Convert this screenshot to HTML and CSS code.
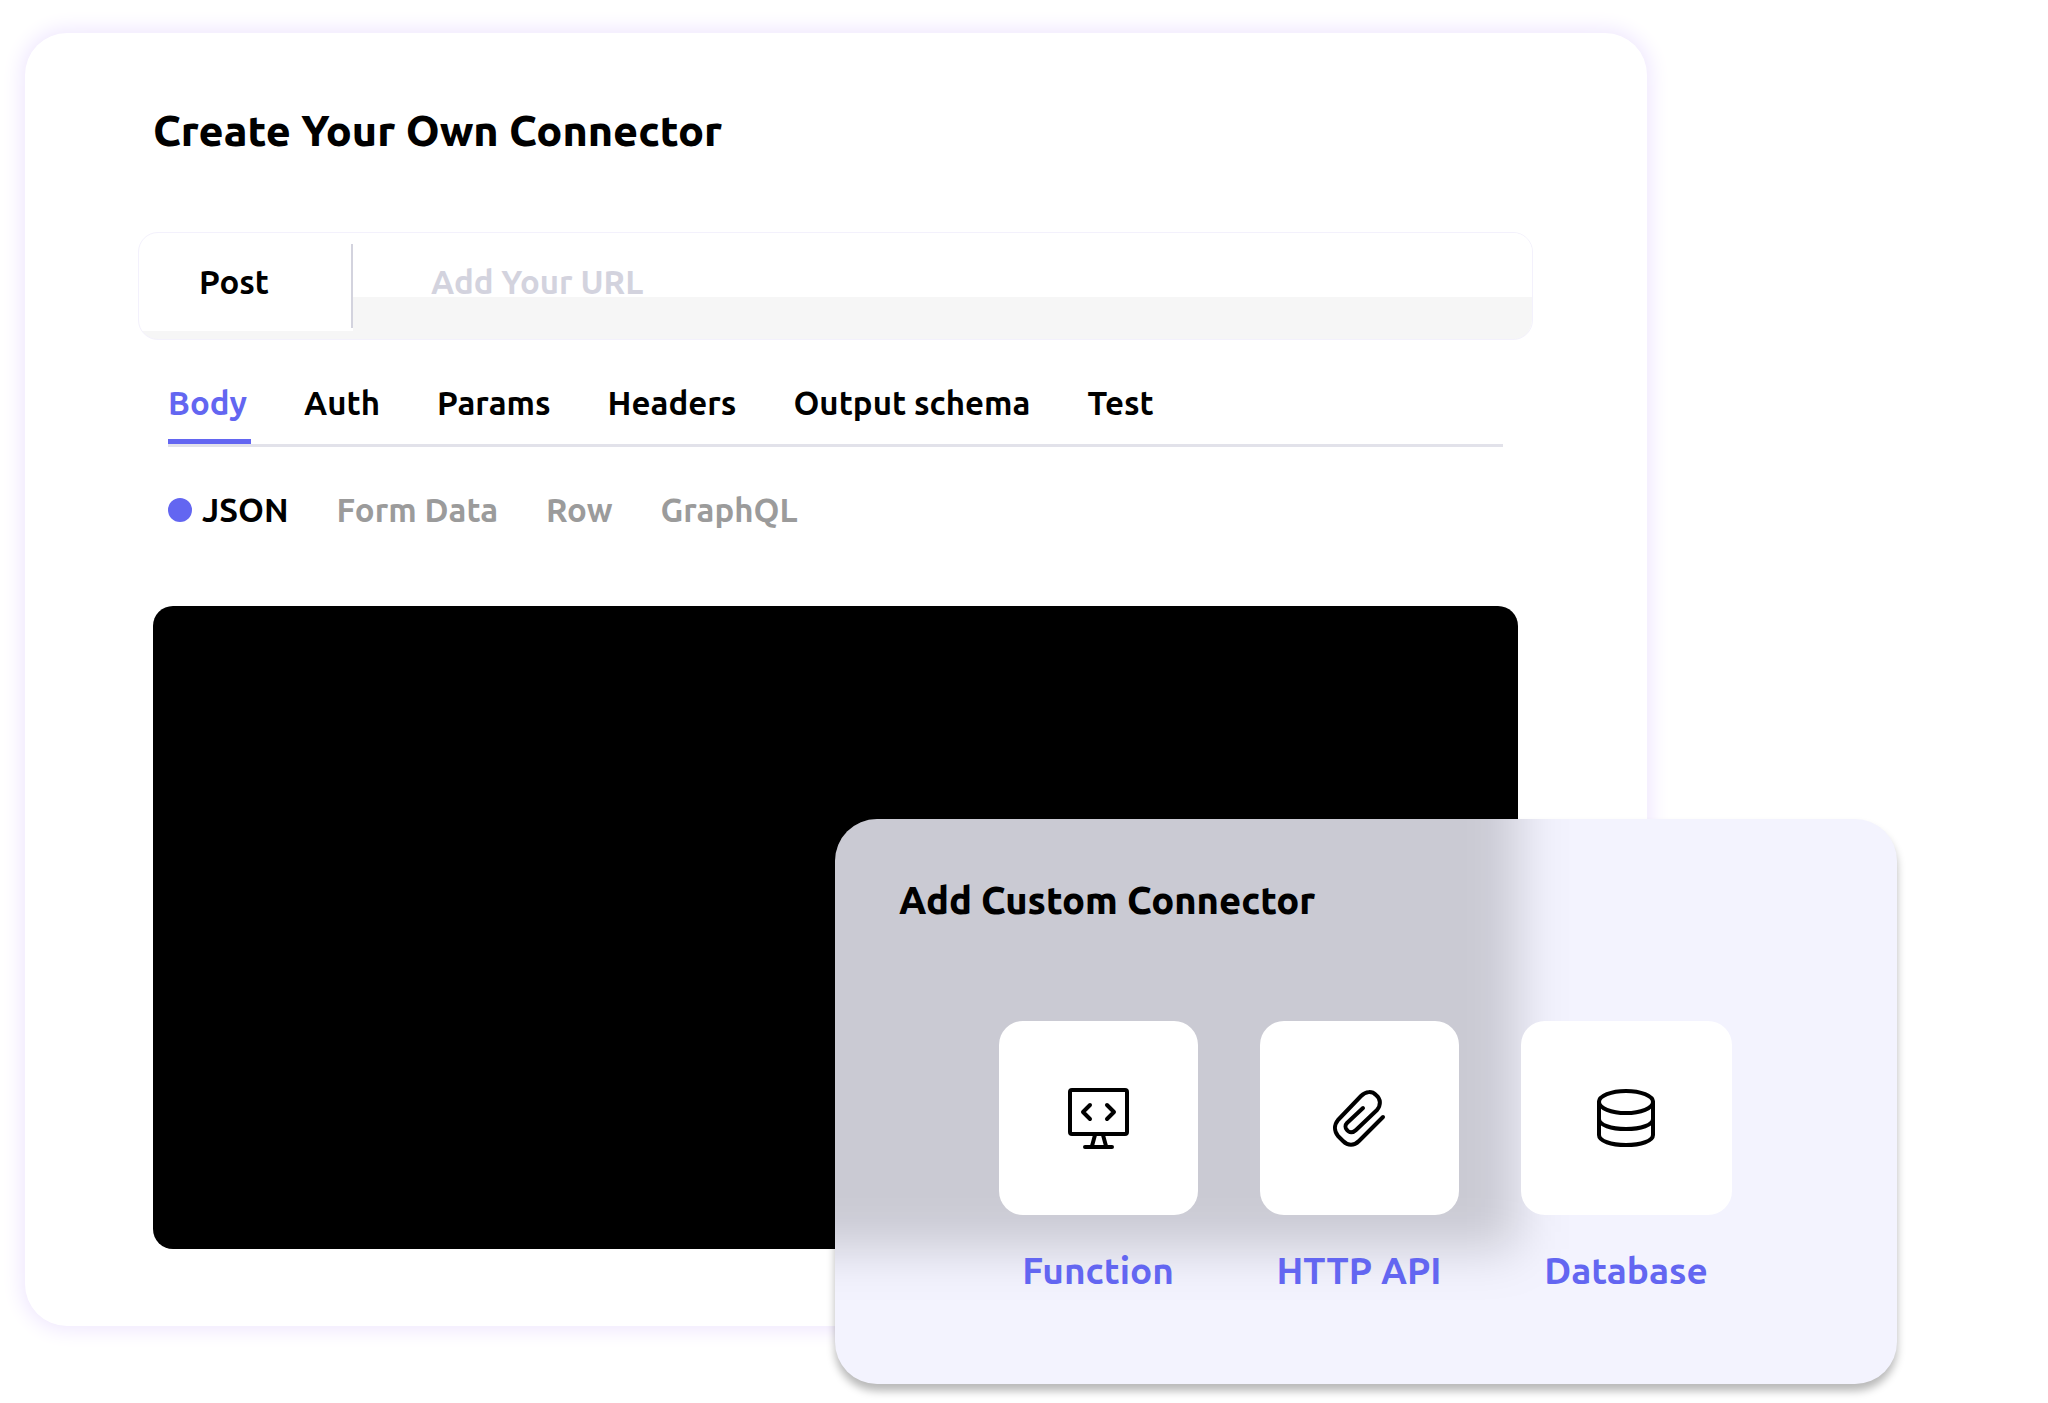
FILE: index.html
```html
<!DOCTYPE html>
<html lang="en">
<head>
	<meta charset="UTF-8">
	<meta name="viewport" content="width=device-width, initial-scale=1">
	<title>Create Your Own Connector</title>
	<link rel="stylesheet" href="styles.css">
</head>
<body>
	<main class="page">
		<section class="panel">
			<h1 class="panel-title">Create Your Own Connector</h1>

			<form class="request">
				<select class="method" aria-label="Method">
					<option>Post</option>
				</select>
				<input class="url" type="text" aria-label="URL" placeholder="Add Your URL">
			</form>

			<nav class="tabs">
				<button type="button" class="tab active">Body</button>
				<button type="button" class="tab">Auth</button>
				<button type="button" class="tab">Params</button>
				<button type="button" class="tab">Headers</button>
				<button type="button" class="tab">Output schema</button>
				<button type="button" class="tab">Test</button>
			</nav>

			<div class="formats">
				<label class="format"><input type="radio" name="format" checked>JSON</label>
				<label class="format"><input type="radio" name="format">Form Data</label>
				<label class="format"><input type="radio" name="format">Row</label>
				<label class="format"><input type="radio" name="format">GraphQL</label>
			</div>

			<div class="editor"></div>
		</section>

		<!-- floating card over the panel -->
		<section class="card">
			<h2 class="card-title">Add Custom Connector</h2>
			<div class="options">
				<button type="button" class="option">
					<span class="tile">
						<svg width="64" height="64" viewBox="0 0 64 64">
							<rect x="4" y="4" width="57" height="44" rx="2"/>
							<path d="M24 19l-7 7 7 7M41 19l7 7-7 7M29 49l-3 11M37 49l3 11M19 61h27"/>
						</svg>
					</span>
					<span class="label">Function</span>
				</button>
				<button type="button" class="option">
					<span class="tile">
						<svg width="64" height="64" viewBox="0 0 64 64">
							<path d="M56 31L32 55c-5 5-11 5-16 0l-5-5c-4-5-4-11 0-16L34 10c5-5 11-5 15-1 5 4 5 10 1 15L29 44c-3 3-7 3-9 0-2-2-2-5 0-7L36 22"/>
						</svg>
					</span>
					<span class="label">HTTP API</span>
				</button>
				<button type="button" class="option wide">
					<span class="tile">
						<svg width="64" height="64" viewBox="0 0 64 64">
							<ellipse cx="32" cy="16" rx="27" ry="11"/>
							<path d="M5 16v33c0 6 12 10 27 10s27-4 27-10V16M5 33c0 6 12 10 27 10s27-4 27-10"/>
						</svg>
					</span>
					<span class="label">Database</span>
				</button>
			</div>
		</section>
	</main>
</body>
</html>
```
FILE: styles.css
```css
* {
	box-sizing: border-box;
}

body {
	margin: 0;
	background: #fff;
	color: #000;
	font-family: Ubuntu, "Noto Sans", sans-serif;
	font-size: 33px;
	font-weight: 600;
	line-height: 44px;
}

h1, h2 {
	margin: 0;
	font-weight: 900;
}

button, input, select {
	margin: 0;
	padding: 0;
	border: 0;
	background: none;
	color: inherit;
	font: inherit;
}

.page {
	position: relative;
	padding: 33px 401px 78px 25px;
}

.panel {
	padding: 69px 114px 77px 113px;
	border-radius: 42px;
	background: #fff;
	box-shadow: 0 0 20px 4px #efe7fe;
}

.panel-title {
	padding-left: 15px;
	font-size: 43px;
	line-height: 56px;
}

/* method + url */
.request {
	display: flex;
	height: 108px;
	margin-top: 74px;
	overflow: hidden;
	border: 1px solid #f3f1fc;
	border-radius: 20px;
	background: linear-gradient(#fff 98px, #f6f6f6 98px);
}

.method {
	appearance: none;
	width: 214px;
	height: 84px;
	margin-top: 11px;
	padding: 0 60px 8px;
	border-right: 2px solid #d3d3de;
}

.url {
	flex: 1;
	padding: 0 78px 8px;
	background: linear-gradient(#fff 64px, #f6f6f6 64px);
}

.url::placeholder {
	color: #d3d3de;
	opacity: 1;
}

/* tabs */
.tabs {
	display: flex;
	gap: 53px;
	margin: 41px 30px 0;
	border-bottom: 3px solid #e2e2ea;
}

.tab {
	padding: 0 4px 14px 0;
	border-bottom: 5px solid transparent;
	white-space: nowrap;
}

.tab.active {
	border-color: #6366f1;
	color: #6366f1;
}

/* body format */
.formats {
	display: flex;
	gap: 48px;
	margin: 41px 30px 0;
}

.format {
	display: flex;
	align-items: center;
	gap: 10px;
	color: #9b9b9b;
}

.format input {
	display: none;
	appearance: none;
	width: 24px;
	height: 24px;
	border-radius: 50%;
	background: #6366f1;
}

.format input:checked {
	display: block;
}

.format:has(input:checked) {
	color: #000;
}

.editor {
	height: 643px;
	margin: 74px 15px 0;
	border-radius: 20px;
	background: #000;
}

/* card */
.card {
	position: absolute;
	top: 819px;
	left: 835px;
	right: 151px;
	padding: 53px 64px 89px;
	overflow: hidden;
	isolation: isolate;
	border-radius: 42px;
	background: #f3f3fe;
	box-shadow: 0 7px 8px rgba(0, 0, 0, 0.28);
}

/* soft shade of the editor behind the card */
.card::before {
	content: "";
	position: absolute;
	z-index: -1;
	top: -120px;
	left: -120px;
	right: 379px;
	bottom: 135px;
	background: rgba(0, 0, 0, 0.17);
	filter: blur(25px);
}

.card-title {
	font-size: 38px;
	line-height: 56px;
}

.options {
	display: flex;
	justify-content: center;
	gap: 62px;
	margin: 93px 2px 0 0;
}

.option {
	display: flex;
	flex-direction: column;
	gap: 32px;
	width: 199px;
	color: #6366f1;
	font-size: 37px;
	line-height: 48px;
	text-align: center;
}

.option.wide {
	width: 211px;
}

.tile {
	display: flex;
	align-items: center;
	justify-content: center;
	height: 194px;
	border-radius: 24px;
	background: #fff;
}

.tile svg {
	fill: none;
	stroke: #000;
	stroke-width: 4;
	stroke-linecap: round;
	stroke-linejoin: round;
}
```
